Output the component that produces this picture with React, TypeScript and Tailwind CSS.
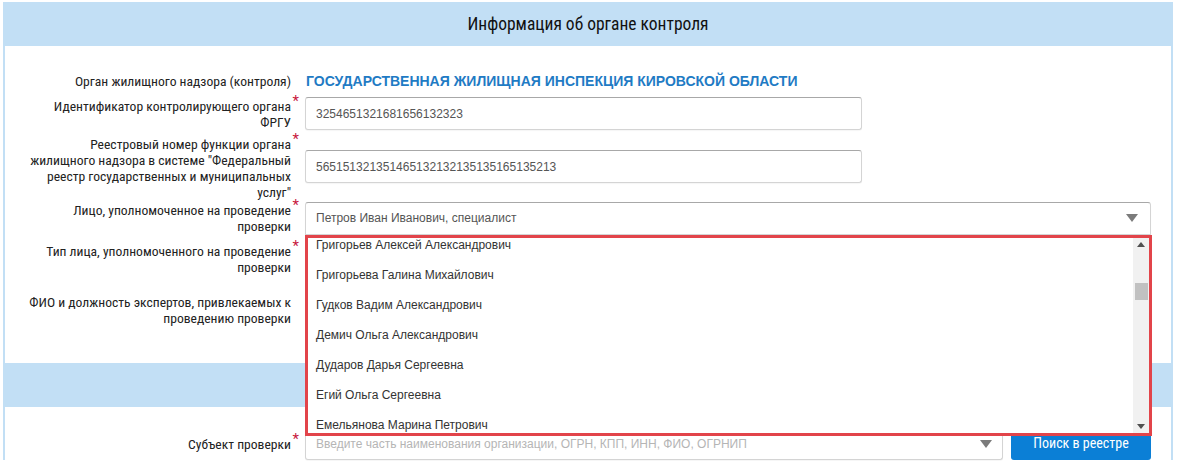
import React from 'react';

const narrow = "font-['Liberation_Sans_Narrow','Roboto_Condensed','Arial_Narrow',Roboto,sans-serif]";
const arial = "font-['Liberation_Sans',Arial,sans-serif]";

const people = [
  'Григорьев Алексей Александрович',
  'Григорьева Галина Михайлович',
  'Гудков Вадим Александрович',
  'Демич Ольга Александрович',
  'Дударов Дарья Сергеевна',
  'Егий Ольга Сергеевна',
  'Емельянова Марина Петрович',
];

function Label({ children, required }: { children: React.ReactNode; required?: boolean }) {
  return (
    <div className={`relative w-[300px] shrink-0 pr-[14px] text-right text-[13.6px] leading-4 text-[#222] ${narrow}`}>
      {children}
      {required && <span className="absolute right-[6px] top-[-5px] text-[15px] text-[#c8173d]">*</span>}
    </div>
  );
}

function Caret({ className = '' }: { className?: string }) {
  return (
    <svg width="12" height="8" viewBox="0 0 12 8" className={className}>
      <path d="M0 0 L12 0 L6 8 Z" fill="#7b7b7b" />
    </svg>
  );
}

const inputCls =
  'h-[33px] rounded-[3px] border border-[#d4d4d4] border-t-[#a8a8a8] bg-white px-[10px] flex items-center text-[12px] text-[#555] shadow-[0_1px_1px_rgba(0,0,0,0.04)]';

export default function App() {
  return (
    <div className="relative h-[461px] w-[1183px] overflow-hidden bg-white pt-[2px]">
      <div className="ml-[3px] w-[1170px] border-x-2 border-[#c2dff5]">
        {/* header */}
        <div className={`-mx-[2px] flex h-[44px] items-center justify-center bg-[#c2dff5] text-[17.5px] text-[#111] ${narrow}`}>
          Информация об органе контроля
        </div>

        <div className="flex flex-col pt-[23px] pb-[37px]">
          <div className="flex h-[24px] items-center">
            <Label>Орган жилищного надзора (контроля)</Label>
            <div className={`pl-[1px] text-[14px] font-bold text-[#1f7bc4] ${arial}`}>
              ГОСУДАРСТВЕННАЯ ЖИЛИЩНАЯ ИНСПЕКЦИЯ КИРОВСКОЙ ОБЛАСТИ
            </div>
          </div>

          <div className="mt-[4px] flex h-[33px] items-center">
            <Label required>
              Идентификатор контролирующего органа
              <br />
              ФРГУ
            </Label>
            <div className={`${inputCls} ${arial} w-[557px]`}>3254651321681656132323</div>
          </div>

          <div className="mt-[6px] flex h-[64px] items-center">
            <Label required>
              Реестровый номер функции органа
              <br />
              жилищного надзора в системе "Федеральный
              <br />
              реестр государственных и муниципальных
              <br />
              услуг"
            </Label>
            <div className={`${inputCls} ${arial} -mt-[3px] w-[557px]`}>565151321351465132132135135165135213</div>
          </div>

          <div className="mt-[2px] flex h-[32px] items-center">
            <Label required>
              Лицо, уполномоченное на проведение
              <br />
              проверки
            </Label>
            <div className={`${inputCls} ${arial} h-[32px] w-[846px] justify-between rounded-b-none text-[#444]`}>
              <span>Петров Иван Иванович, специалист</span>
              <Caret className="mr-[2px]" />
            </div>
          </div>

          <div className="mt-[9px] flex h-[32px] items-center">
            <Label required>
              Тип лица, уполномоченного на проведение
              <br />
              проверки
            </Label>
            <div className={`${inputCls} ${arial} h-[32px] w-[846px]`} />
          </div>

          <div className="mt-[19px] flex h-[32px] items-center">
            <Label>
              ФИО и должность экспертов, привлекаемых к
              <br />
              проведению проверки
            </Label>
            <div className={`${inputCls} ${arial} h-[32px] w-[846px]`} />
          </div>
        </div>

        {/* second section header */}
        <div className="-mx-[2px] h-[44px] bg-[#c2dff5]" />

        <div className="flex items-center pt-[20px]">
          <Label required>Субъект проверки</Label>
          <div className={`${inputCls} ${arial} h-[32px] w-[698px] justify-between text-[#b5b5b5]`}>
            <span>Введите часть наименования организации, ОГРН, КПП, ИНН, ФИО, ОГРНИП</span>
            <Caret />
          </div>
          <button
            className={`ml-[8px] h-[32px] w-[140px] rounded-[3px] bg-[#0b7fd6] text-[14px] text-white ${narrow}`}
          >
            Поиск в реестре
          </button>
        </div>
      </div>

      {/* open dropdown list */}
      <div className={`absolute left-[305px] top-[235px] flex h-[201px] w-[847px] border-[3px] border-[#e2444a] bg-white ${arial}`}>
        <div className="flex-1 overflow-hidden">
          <ul className="-mt-[8px]">
            {people.map(p => (
              <li key={p} className="flex h-[30px] items-center pl-[8px] text-[12px] text-[#333]">
                {p}
              </li>
            ))}
          </ul>
        </div>
        <div className="flex w-[16px] flex-col items-center bg-[#f1f1f1]">
          <svg width="8" height="5" viewBox="0 0 8 5" className="mt-[4px]">
            <path d="M0 5 L8 5 L4 0 Z" fill="#505050" />
          </svg>
          <div className="mt-[36px] h-[17px] w-[13px] bg-[#c1c1c1]" />
          <div className="flex-1" />
          <svg width="8" height="5" viewBox="0 0 8 5" className="mb-[4px]">
            <path d="M0 0 L8 0 L4 5 Z" fill="#505050" />
          </svg>
        </div>
      </div>
    </div>
  );
}
